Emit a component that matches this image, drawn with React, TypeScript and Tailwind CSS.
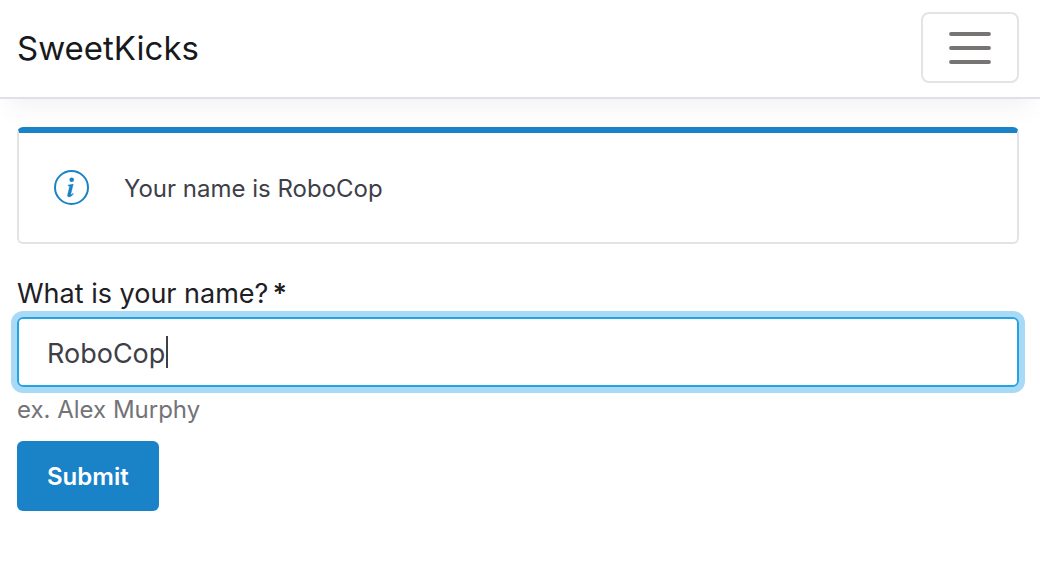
import { useState } from "react";

const SAVED_NAME = "RoboCop";

function InfoIcon() {
  return (
    <svg viewBox="0 0 36 36" className="size-9 shrink-0" aria-hidden="true">
      <circle cx="18.5" cy="17.5" r="16.5" fill="none" stroke="#1a82c6" strokeWidth="2" />
      <circle cx="18.7" cy="9.8" r="2.3" fill="#1a82c6" />
      <path
        d="M15.2 15l5.1-.9-2.4 9.9c-.2.9.4.9 2-.8l.6.5c-1.6 2.2-3 3.3-4.5 3.3-1.3 0-1.8-.9-1.4-2.5l1.8-7.3c.2-.8-.1-1.1-1.3-1.2z"
        fill="#1a82c6"
        stroke="#1a82c6"
        strokeWidth="0.3"
      />
    </svg>
  );
}

export default function App() {
  const [name, setName] = useState(SAVED_NAME);
  const pristine = name === SAVED_NAME;
  return (
    <div className="min-h-screen bg-white font-['Inter',sans-serif] text-[#1d2025]">
      <header className="flex items-center justify-between border-b-2 border-[#dee2e6] px-[17px] pt-3 pb-[14px] shadow-[0_16px_24px_-8px_rgba(0,0,0,0.055)]">
        <a href="#" className="text-[33px] leading-12 text-[#18191c]">SweetKicks</a>
        <button type="button" aria-label="Toggle navigation" className="mr-1 flex h-[71px] w-[98px] items-center justify-center rounded-lg border-2 border-[#e4e4e4]">
          <svg viewBox="0 0 42 32" className="h-8 w-[42px]" fill="none" stroke="#777573" strokeWidth="3.8" strokeLinecap="round" aria-hidden="true">
            <path d="M2 2h38M2 16h38M2 30h38" />
          </svg>
        </button>
      </header>
      <main className="pt-7 pr-[21px] pl-[17px]">
        <div role="status" className="flex h-[117px] items-center gap-[35px] rounded-md border-2 border-t-[6px] border-[#e3e3e3] border-t-[#1a82c6] px-[34px]">
          <InfoIcon />
          <p className="pt-0.5 text-2xl text-[#3e3f47]">Your name is RoboCop</p>
        </div>
        <form className="pt-[30px]" onSubmit={(e) => e.preventDefault()}>
          <label htmlFor="name" className="block pb-1 text-[27px] leading-[39px]">
            What is your name?<span className="ml-1 font-semibold">*</span>
          </label>
          <div className="relative">
            <input
              id="name"
              autoFocus
              value={name}
              onChange={(e) => setName(e.target.value)}
              aria-describedby="hint"
              className={`block h-[70px] w-full rounded-md border-2 border-[#26a3e4] px-7 pt-0.5 text-[27px] text-[#3e3f47] shadow-[0_0_0_6px_#a8daf5] outline-none ${pristine ? "caret-transparent" : "caret-[#3e3f47]"}`}
            />
            {pristine && <span aria-hidden="true" className="absolute top-[19px] left-[149px] h-8 w-0.5 bg-[#3e3f47]" />}
          </div>
          <p id="hint" className="pt-1 text-2xl leading-[38px] text-[#737378]">ex. Alex Murphy</p>
          <button type="submit" className="mt-3 h-[70px] rounded-md bg-[#1a82c6] px-[30px] pt-0.5 text-2xl font-semibold text-white">Submit</button>
        </form>
      </main>
    </div>
  );
}
